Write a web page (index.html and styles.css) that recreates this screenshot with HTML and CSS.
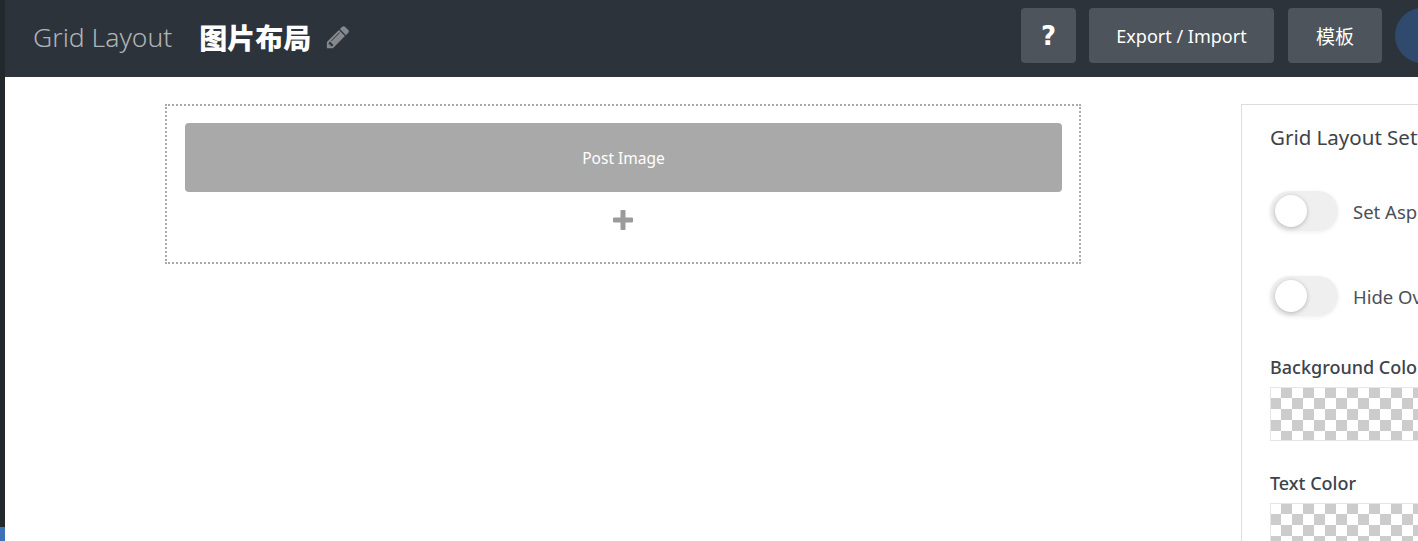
FILE: index.html
```html
<!DOCTYPE html>
<html lang="en">

<head>
    <meta charset="utf-8" />
    <meta name="viewport" content="width=device-width, initial-scale=1.0">
    <title>Grid Layout</title>
    <link rel="stylesheet" href="styles.css">
</head>

<body>
    <div class="app">
        <div class="side-strip">
            <div class="side-strip-active"></div>
        </div>
        <div class="main">
            <header class="topbar">
                <span class="topbar-label">Grid Layout</span>
                <span class="topbar-name">图片布局</span>
                <svg class="edit-icon" viewBox="0 0 1792 1792" aria-hidden="true">
                    <path d="M491 1536l91-91-235-235-91 91v107h128v128h107zm523-928q0-22-22-22-10 0-17 7l-542 542q-7 7-7 17 0 22 22 22 10 0 17-7l542-542q7-7 7-17zm-54-192l416 416-832 832h-416v-416zm683 96q0 53-37 91l-166 166-416-416 166-165q36-38 91-38 53 0 91 38l235 234q37 39 37 90z" />
                </svg>
                <div class="topbar-actions">
                    <button class="btn btn-help">?</button>
                    <button class="btn btn-export">Export / Import</button>
                    <button class="btn btn-template">模板</button>
                    <button class="btn-save"></button>
                </div>
            </header>
            <div class="workspace">
                <section class="canvas">
                    <div class="grid-item">Post Image</div>
                    <div class="add-row">
                        <svg class="add-icon" viewBox="0 0 20 20" aria-hidden="true">
                            <path d="M7.5 1q0-1 1-1h3q1 0 1 1v6.500h6.500q1 0 1 1v3q0 1-1 1h-6.500v6.500q0 1-1 1h-3q-1 0-1-1v-6.500h-6.500q-1 0-1-1v-3q0-1 1-1h6.500z" />
                        </svg>
                    </div>
                </section>
                <aside class="settings">
                    <h3 class="settings-title">Grid Layout Settings</h3>
                    <div class="toggles">
                        <div class="toggle-row">
                            <span class="toggle"><span class="toggle-knob"></span></span>
                            <span class="toggle-label">Set Aspect Ratio</span>
                        </div>
                        <div class="toggle-row">
                            <span class="toggle"><span class="toggle-knob"></span></span>
                            <span class="toggle-label">Hide Overflow</span>
                        </div>
                    </div>
                    <div class="color-field">
                        <label class="color-label">Background Color</label>
                        <div class="color-swatch"></div>
                    </div>
                    <div class="color-field">
                        <label class="color-label">Text Color</label>
                        <div class="color-swatch"></div>
                    </div>
                </aside>
            </div>
        </div>
    </div>
</body>

</html>
```

FILE: styles.css
```css
html,
body {
    margin: 0;
    padding: 0;
    height: 100%;
    overflow: hidden;
    background: #fff;
}

body {
    font-family: "Noto Sans", "Noto Sans CJK SC", sans-serif;
    color: #3c434a;
}

.app {
    display: flex;
    height: 541px;
    width: 1600px;
}

.side-strip {
    width: 5px;
    flex-shrink: 0;
    background: #23282d;
    display: flex;
    flex-direction: column;
    justify-content: flex-end;
}

.side-strip-active {
    height: 14px;
    background: #3d72b8;
}

.main {
    flex: 1;
    min-width: 0;
}

.topbar {
    width: 1465px;
    height: 77px;
    box-sizing: border-box;
    background: #2c333b;
    display: flex;
    align-items: center;
    padding: 0 20px 3px 28px;
}

.topbar-label {
    font-size: 26.5px;
    font-weight: 300;
    color: #b0b3b5;
    margin-right: 27px;
}

.topbar-name {
    font-family: "Noto Sans CJK SC", sans-serif;
    font-size: 28px;
    font-weight: 900;
    color: #fff;
}

.edit-icon {
    width: 26px;
    height: 26px;
    fill: #85898d;
    margin-left: 14px;
}

.topbar-actions {
    margin-left: auto;
    align-self: flex-start;
    margin-top: 8px;
    display: flex;
    gap: 13px;
}

.btn {
    height: 55px;
    border: 0;
    border-radius: 4px;
    background: #4d545c;
    color: #fff;
    font-family: "Noto Sans", "Noto Sans CJK SC", sans-serif;
    font-size: 18px;
    padding: 0;
}

.btn-help {
    width: 55px;
    font-family: "DejaVu Sans", sans-serif;
    font-weight: 700;
    font-size: 26px;
}

.btn-export {
    width: 185px;
}

.btn-template {
    width: 94px;
    margin-left: 1px;
    font-size: 19px;
}

.btn-save {
    width: 55px;
    height: 55px;
    border: 0;
    border-radius: 50%;
    background: #2f4a6d;
}

.workspace {
    display: flex;
    align-items: flex-start;
    padding: 27px 0 0 160px;
}

.canvas {
    width: 916px;
    height: 160px;
    box-sizing: border-box;
    border: 2px dotted #aaa;
    padding: 17px 17px 0 18px;
}

.grid-item {
    height: 69px;
    border-radius: 4px;
    background: #a9a9a9;
    color: #fff;
    font-size: 15.5px;
    display: flex;
    align-items: center;
    justify-content: center;
}

.add-row {
    display: flex;
    justify-content: center;
    padding: 18px 1px 0 0;
}

.add-icon {
    width: 20px;
    height: 20px;
    fill: #9b9b9b;
}

.settings {
    width: 330px;
    height: 500px;
    box-sizing: border-box;
    margin-left: 160px;
    border: 1px solid #ddd;
    padding: 19px 28px 0;
    flex-shrink: 0;
}

.settings-title {
    margin: 0 0 39px;
    font-size: 20.5px;
    line-height: 27px;
    font-weight: 400;
}

.toggles {
    display: flex;
    flex-direction: column;
    gap: 44px;
    margin-bottom: 39px;
}

.toggle-row {
    display: flex;
    align-items: center;
    gap: 15px;
    height: 41px;
}

.toggle {
    width: 68px;
    height: 40px;
    border-radius: 20px;
    background: #efefef;
    box-shadow: 0 1px 4px rgba(0, 0, 0, 0.07);
    display: flex;
    align-items: center;
    padding-left: 5px;
    box-sizing: border-box;
}

.toggle-knob {
    width: 32px;
    height: 32px;
    border-radius: 50%;
    background: #fff;
    box-shadow: 0 1px 4px rgba(0, 0, 0, 0.25);
}

.toggle-label {
    font-size: 18.5px;
    line-height: 43px;
    padding-top: 1px;
    color: #4a5058;
}

.color-field {
    margin-bottom: 30px;
}

.color-label {
    display: block;
    font-size: 18px;
    line-height: 24px;
    font-weight: 500;
    margin-bottom: 8px;
}

.color-swatch {
    height: 54px;
    box-sizing: border-box;
    border: 1px solid #e6e6e6;
    background: repeating-conic-gradient(#ccc 0 25%, #fff 0 50%) -1px -1px / 22px 22px;
}
```
